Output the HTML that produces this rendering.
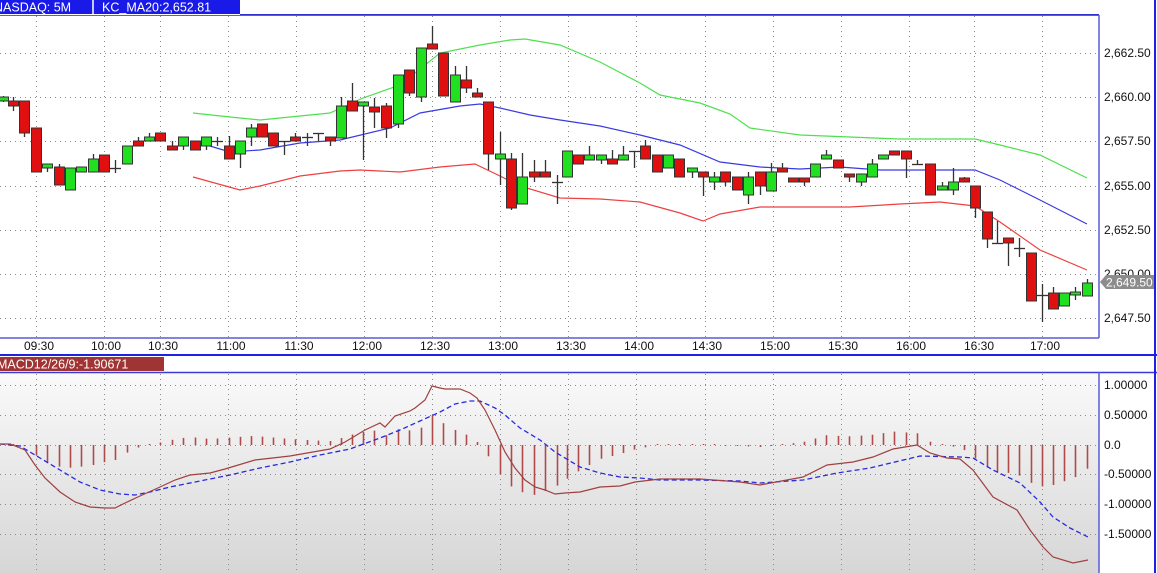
<!DOCTYPE html>
<html><head><meta charset="utf-8">
<style>
html,body{margin:0;padding:0;background:#fff;width:1157px;height:573px;overflow:hidden;font-family:"Liberation Sans",sans-serif}
svg{position:absolute;left:0;top:0}
text{font-family:"Liberation Sans",sans-serif;font-size:12px;fill:#111}
</style></head><body>
<svg id="s" width="1157" height="573" xmlns="http://www.w3.org/2000/svg">
<defs>
<linearGradient id="g" x1="0" y1="0" x2="0" y2="1">
<stop offset="0" stop-color="#fafafa"/><stop offset="1" stop-color="#d6d6d6"/>
</linearGradient>
</defs>
<rect x="0" y="373" width="1099" height="200" fill="url(#g)"/>
<g id="grid" stroke="#8a8a8a" stroke-width="1" stroke-dasharray="1,4"></g>
<rect x="0" y="0" width="240" height="14" fill="#1a1ae8"/>
<line x1="93" y1="0" x2="93" y2="14" stroke="#fff" stroke-width="1.5"/>
<text x="-6" y="11.5" style="fill:#fff;font-size:12.5px">NASDAQ: 5M</text>
<text x="102" y="11.5" style="fill:#fff;font-size:12.5px">KC_MA20:2,652.81</text>
<line x1="240" y1="14.5" x2="1099" y2="14.5" stroke="#3030d0" stroke-width="1"/>
<line x1="0" y1="15.5" x2="1099" y2="15.5" stroke="#5a5ad8" stroke-width="1"/>
<line x1="1099" y1="15" x2="1099" y2="338" stroke="#5a5ad8" stroke-width="1.5"/>
<line x1="0" y1="338" x2="1099" y2="338" stroke="#5a5ad8" stroke-width="1.5"/>
<line x1="0" y1="355" x2="1157" y2="355" stroke="#2020e0" stroke-width="2"/>
<rect x="0" y="357" width="164" height="14" fill="#a03434"/>
<text x="-3" y="368.5" style="fill:#fff;font-size:12.5px">MACD12/26/9:-1.90671</text>
<line x1="0" y1="372.5" x2="1157" y2="372.5" stroke="#3a3ad8" stroke-width="1.5"/>
<line x1="1099" y1="372" x2="1099" y2="573" stroke="#5a5ad8" stroke-width="1.5"/>
<line x1="1155" y1="0" x2="1155" y2="573" stroke="#2020e0" stroke-width="2"/>
<g>
<text x="1104" y="57">2,662.50</text>
<text x="1104" y="101">2,660.00</text>
<text x="1104" y="145">2,657.50</text>
<text x="1104" y="190">2,655.00</text>
<text x="1104" y="234">2,652.50</text>
<text x="1104" y="278">2,650.00</text>
<text x="1104" y="322">2,647.50</text>
</g>
<polygon points="1100,282 1106,275 1154,275 1154,289 1106,289" fill="#8c8c8c"/>
<text x="1106" y="286.5" style="fill:#fff">2,649.50</text>
<g style="font-size:12px">
<text x="1104" y="389">1.00000</text>
<text x="1104" y="419">0.50000</text>
<text x="1104" y="449">0.0</text>
<text x="1104" y="478">-0.50000</text>
<text x="1104" y="508">-1.00000</text>
<text x="1104" y="538">-1.50000</text>
</g>
<g text-anchor="middle">
<text x="39" y="350">09:30</text><text x="106" y="350">10:00</text><text x="163" y="350">10:30</text>
<text x="231" y="350">11:00</text><text x="299" y="350">11:30</text><text x="367" y="350">12:00</text>
<text x="435" y="350">12:30</text><text x="503" y="350">13:00</text><text x="571" y="350">13:30</text>
<text x="639" y="350">14:00</text><text x="707" y="350">14:30</text><text x="775" y="350">15:00</text>
<text x="843" y="350">15:30</text><text x="911" y="350">16:00</text><text x="979" y="350">16:30</text>
<text x="1045" y="350">17:00</text>
</g>
<polyline fill="none" stroke="#4ee04e" stroke-width="1.2" points="193,113 230,117 260,120 300,116 330,113 363,98 400,85 440,53 480,45 510,40 525,39 560,45 600,62 640,83 660,95 700,103 730,114 750,128 800,135 900,139 975,139 1000,145 1040,155 1087,178"/>
<polyline fill="none" stroke="#3a3ae0" stroke-width="1.2" points="193,141 230,152 260,150 300,143 340,140 390,128 420,113 460,106 480,104 500,108 530,115 560,120 600,126 640,135 680,145 720,162 760,167 800,169 840,167 880,170 940,170 975,170 1000,180 1040,200 1087,224"/>
<polyline fill="none" stroke="#ee4040" stroke-width="1.2" points="193,177 240,190 260,186 300,176 340,171 360,170 400,172 440,167 475,164 500,176 520,186 560,198 600,199 640,202 680,213 703,221 720,214 760,207 800,207 850,207 900,204 940,202 975,206 1000,222 1040,250 1087,270"/>
<g id="candles"></g>
<g id="hist"></g>
<polyline id="sig" fill="none" stroke="#2a2ae0" stroke-width="1.3" stroke-dasharray="5,3"/>
<polyline id="macd" fill="none" stroke="#a04040" stroke-width="1.2"/>
</svg>
<script>
var NS="http://www.w3.org/2000/svg",grid=document.getElementById('grid');
function L(p,x1,y1,x2,y2,a){var e=document.createElementNS(NS,'line');e.setAttribute('x1',x1);e.setAttribute('y1',y1);e.setAttribute('x2',x2);e.setAttribute('y2',y2);if(a)for(var k in a)e.setAttribute(k,a[k]);p.appendChild(e);}
var vx=[36,104,160,228,296,364,432,500,568,636,705,773,841,909,974,1042];
vx.forEach(function(x){L(grid,x+.5,16,x+.5,338);L(grid,x+.5,374,x+.5,573);});
[53,97,141,186,230,274,318,385,415,445,474,504,534].forEach(function(y){L(grid,0,y+.5,1099,y+.5);});
var C=[[3,97,101,96,102,'g'],[13,101,106,97,111,'r'],[24,101,133,101,137,'r'],[36,128,172,128,172,'r'],[47,164,168,164,172,'g'],[59,167,185,164,185,'r'],[70,168,190,168,190,'g'],[81,167,172,167,172,'g'],[93,159,172,154,172,'g'],[104,155,172,155,172,'r'],[115,168,168,160,173,'d'],[127,146,164,146,164,'g'],[138,141,146,137,146,'r'],[149,137,141,133,141,'g'],[160,133,141,133,141,'r'],[172,146,150,141,150,'r'],[183,137,146,137,150,'g'],[195,141,150,141,150,'r'],[206,137,146,137,150,'g'],[217,141,141,137,146,'d'],[229,146,159,136,159,'r'],[240,141,154,141,168,'g'],[251,128,137,124,146,'g'],[262,124,137,124,137,'r'],[273,133,146,133,146,'r'],[284,141,141,141,155,'d'],[295,137,141,133,141,'r'],[307,137,137,133,146,'d'],[318,133,133,133,141,'d'],[330,137,141,137,146,'r'],[341,106,138,97,138,'g'],[352,101,111,83,111,'r'],[363,102,106,102,160,'g'],[374,107,112,98,128,'r'],[386,106,128,103,138,'r'],[398,75,124,75,128,'g'],[409,70,93,70,96,'r'],[421,48,97,48,102,'g'],[432,44,49,26,49,'r'],[443,53,96,53,96,'r'],[455,75,102,66,102,'g'],[466,80,88,66,93,'r'],[477,93,97,88,97,'r'],[488,102,154,102,170,'r'],[500,154,159,132,185,'g'],[511,159,208,153,210,'r'],[522,177,204,153,204,'g'],[534,172,177,160,182,'r'],[545,172,177,160,177,'r'],[557,182,182,175,204,'d'],[567,151,177,151,177,'g'],[578,155,164,155,164,'r'],[589,155,160,146,160,'g'],[601,155,160,155,164,'g'],[612,159,164,150,164,'r'],[623,155,160,146,160,'g'],[634,151,151,151,168,'d'],[645,146,159,140,159,'r'],[657,155,172,155,172,'r'],[668,155,168,155,168,'g'],[679,159,177,159,177,'r'],[692,168,172,168,178,'g'],[703,172,177,172,196,'r'],[714,177,182,172,190,'g'],[725,172,182,172,186,'r'],[737,177,190,177,190,'r'],[748,177,195,172,204,'g'],[760,172,186,172,195,'r'],[771,172,191,163,191,'g'],[782,168,172,163,172,'r'],[793,178,182,178,182,'r'],[804,178,182,178,186,'r'],[815,164,177,164,177,'g'],[826,155,159,150,159,'g'],[838,160,168,160,168,'r'],[849,174,177,174,182,'r'],[861,174,182,174,186,'g'],[872,164,177,159,177,'g'],[883,155,159,155,159,'g'],[894,151,155,151,155,'r'],[906,151,159,151,178,'r'],[917,164,164,160,164,'d'],[930,164,195,164,195,'r'],[942,186,190,182,190,'g'],[953,182,190,168,195,'g'],[964,178,182,177,182,'r'],[975,186,208,186,218,'r'],[987,212,239,212,248,'r'],[997,243,243,221,243,'d'],[1008,238,243,238,266,'r'],[1019,248,248,238,257,'d'],[1031,253,301,253,301,'r'],[1042,295,295,284,322,'d'],[1053,293,309,287,309,'r'],[1064,293,306,293,306,'g'],[1075,292,294,287,300,'g'],[1087,283,296,279,296,'g']];
var cg=document.getElementById('candles');
C.forEach(function(c){var x=c[0];L(cg,x+.5,c[3],x+.5,c[4],{stroke:'#333','stroke-width':1.3});
if(c[5]=='d'){L(cg,x-5,c[1]+.5,x+6,c[1]+.5,{stroke:'#333','stroke-width':1.3});return;}
var r=document.createElementNS(NS,'rect');r.setAttribute('x',x-4.5);r.setAttribute('y',c[1]);r.setAttribute('width',10);r.setAttribute('height',Math.max(3,c[2]-c[1]));r.setAttribute('fill',c[5]=='g'?'#20e020':'#e01010');r.setAttribute('stroke','#333');r.setAttribute('stroke-width',1);cg.appendChild(r);});
var M=[[0,444],[10,444],[25,450],[35,465],[45,478],[60,492],[75,502],[90,507],[105,508],[115,508],[125,503],[140,496],[160,487],[175,480],[190,475],[210,473],[225,469],[235,466],[255,460],[290,456],[330,449],[345,442],[365,430],[380,423],[385,427],[395,416],[410,411],[415,408],[425,400],[432,386],[440,388],[445,389],[460,389],[470,393],[477,398],[485,410],[495,430],[505,452],[515,468],[525,480],[535,487],[545,490],[555,494],[565,493],[580,492],[600,487],[620,486],[635,482],[660,479],[700,479],[740,482],[760,485],[803,477],[827,465],[853,462],[873,457],[893,449],[917,445],[930,453],[947,458],[960,459],[973,470],[993,497],[1017,510],[1030,530],[1043,547],[1053,557],[1073,563],[1088,560]];
var S=[[0,444],[20,446],[40,458],[60,470],[80,482],[100,490],[120,494],[135,495],[150,492],[170,487],[200,481],[230,475],[260,468],[290,462],[320,455],[350,449],[380,438],[400,430],[420,421],[440,412],[455,404],[470,401],[480,401],[495,408],[505,415],[520,428],[540,440],[555,452],[570,461],[580,467],[600,473],[620,477],[640,478],[660,480],[700,480],[740,481],[760,483],[803,480],[837,473],[870,468],[920,456],[960,457],[973,458],[993,470],[1020,483],[1040,502],[1053,517],[1070,528],[1088,537]];
function pts(a){return a.map(function(p){return p.join(',')}).join(' ');}
document.getElementById('macd').setAttribute('points',pts(M));
document.getElementById('sig').setAttribute('points',pts(S));
function interp(a,x){for(var i=1;i<a.length;i++){if(a[i][0]>=x){var p=a[i-1],q=a[i];return p[1]+(q[1]-p[1])*(x-p[0])/(q[0]-p[0]);}}return a[a.length-1][1];}
var hg=document.getElementById('hist');
C.forEach(function(c){var x=c[0];var d=(interp(M,x)-interp(S,x))*1.0;if(Math.abs(d)<1)d=d<0?-1:1;L(hg,x+.5,445,x+.5,445+d,{stroke:'#b04a4a','stroke-width':1.6});});
</script>
</body></html>
